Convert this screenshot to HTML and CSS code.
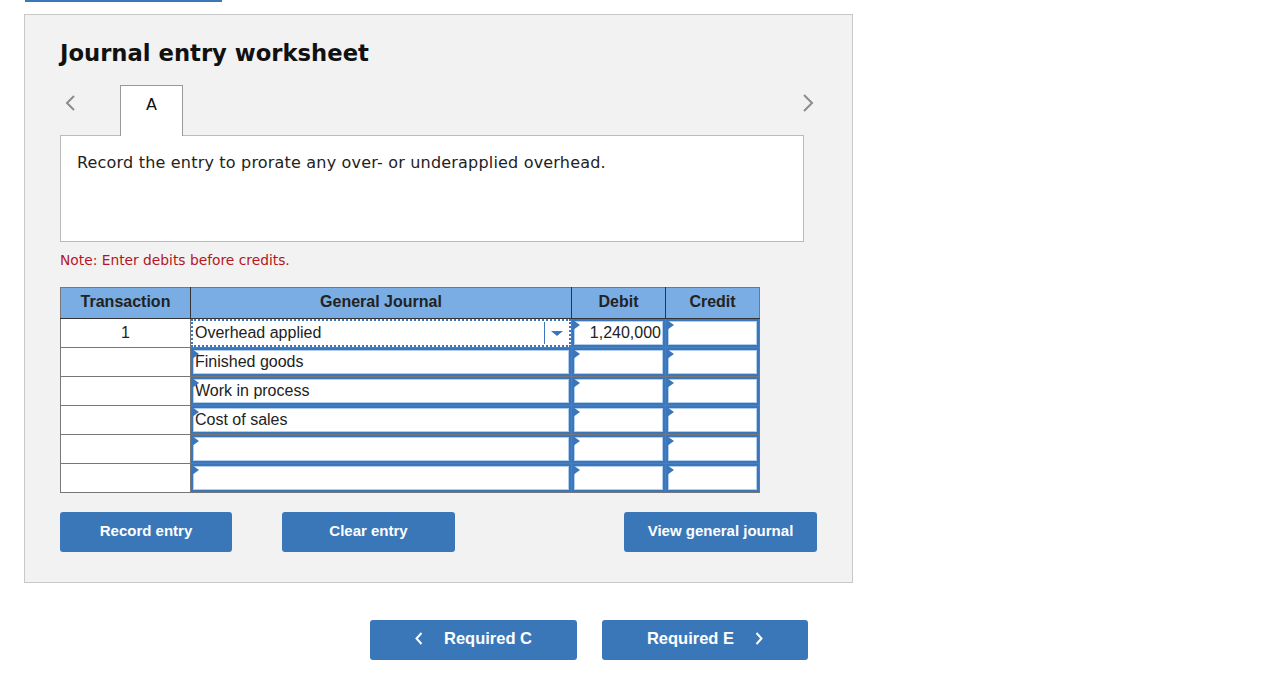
FILE: index.html
```html
<!DOCTYPE html>
<html lang="en">
<head>
    <meta charset="UTF-8">
    <meta name="viewport" content="width=device-width, initial-scale=1.0">
    <title>Journal entry worksheet</title>
    <link rel="stylesheet" href="styles.css">
</head>
<body>
    <div class="top-line"></div>

    <div class="worksheet">
        <h1>Journal entry worksheet</h1>

        <div class="tab-row">
            <button class="tab-arrow" aria-label="Previous">
                <svg width="12" height="16" viewBox="0 0 12 16"><polyline points="10,1 3,8 10,15" /></svg>
            </button>
            <div class="tab">A</div>
            <button class="tab-arrow next" aria-label="Next">
                <svg width="12" height="18" viewBox="0 0 12 18"><polyline points="2,1 10,9 2,17" /></svg>
            </button>
        </div>

        <div class="prompt">Record the entry to prorate any over- or underapplied overhead.</div>

        <p class="note">Note: Enter debits before credits.</p>

        <table class="journal">
            <colgroup>
                <col class="col-trans">
                <col class="col-account">
                <col class="col-amount">
                <col class="col-amount">
            </colgroup>
            <thead>
                <tr>
                    <th>Transaction</th>
                    <th>General Journal</th>
                    <th>Debit</th>
                    <th>Credit</th>
                </tr>
            </thead>
            <tbody>
                <tr>
                    <td class="trans">1</td>
                    <td>
                        <div class="field select">
                            <span class="value">Overhead applied</span>
                            <span class="caret"></span>
                        </div>
                    </td>
                    <td><div class="field marked amount">1,240,000</div></td>
                    <td><div class="field marked amount"></div></td>
                </tr>
                <tr>
                    <td class="trans"></td>
                    <td><div class="field marked">Finished goods</div></td>
                    <td><div class="field marked amount"></div></td>
                    <td><div class="field marked amount"></div></td>
                </tr>
                <tr>
                    <td class="trans"></td>
                    <td><div class="field marked">Work in process</div></td>
                    <td><div class="field marked amount"></div></td>
                    <td><div class="field marked amount"></div></td>
                </tr>
                <tr>
                    <td class="trans"></td>
                    <td><div class="field marked">Cost of sales</div></td>
                    <td><div class="field marked amount"></div></td>
                    <td><div class="field marked amount"></div></td>
                </tr>
                <tr>
                    <td class="trans"></td>
                    <td><div class="field marked"></div></td>
                    <td><div class="field marked amount"></div></td>
                    <td><div class="field marked amount"></div></td>
                </tr>
                <tr>
                    <td class="trans"></td>
                    <td><div class="field marked"></div></td>
                    <td><div class="field marked amount"></div></td>
                    <td><div class="field marked amount"></div></td>
                </tr>
            </tbody>
        </table>

        <div class="actions">
            <button class="btn btn-record">Record entry</button>
            <button class="btn btn-clear">Clear entry</button>
            <button class="btn btn-view">View general journal</button>
        </div>
    </div>

    <div class="nav">
        <button class="btn nav-btn">
            <svg width="8" height="13" viewBox="0 0 8 13"><polyline points="6.5,1 1.5,6.5 6.5,12" /></svg>
            <span>Required C</span>
        </button>
        <button class="btn nav-btn">
            <span>Required E</span>
            <svg width="8" height="13" viewBox="0 0 8 13"><polyline points="1.5,1 6.5,6.5 1.5,12" /></svg>
        </button>
    </div>
</body>
</html>
```

FILE: styles.css
```css
body {
    margin: 0;
    background-color: #ffffff;
    font-family: "Liberation Sans", Arial, sans-serif;
    color: #222;
}

button {
    font-family: inherit;
    cursor: pointer;
}

.top-line {
    width: 197px;
    height: 2px;
    margin-left: 25px;
    background-color: #3a77b8;
}

.worksheet {
    width: 758px;
    height: 567px;
    margin: 12px 0 0 24px;
    padding: 0 34px 0 35px;
    background-color: #f2f2f2;
    border: 1px solid #c8c8c8;
}

h1 {
    margin: 24px 0 0;
    font-family: "DejaVu Sans", Verdana, sans-serif;
    font-size: 22.7px;
    line-height: 28px;
    font-weight: bold;
    color: #111;
}

/* tabs */
.tab-row {
    display: flex;
    align-items: flex-start;
    height: 51px;
    margin-top: 18px;
}

.tab-arrow {
    width: 20px;
    height: 20px;
    margin-top: 8px;
    padding: 0;
    border: none;
    background: none;
    display: flex;
    align-items: center;
    justify-content: center;
}

.tab-arrow svg polyline {
    fill: none;
    stroke: #8c8c8c;
    stroke-width: 2;
}

.tab-arrow.next {
    margin-left: auto;
}

.tab {
    position: relative;
    z-index: 1;
    width: 63px;
    height: 51px;
    margin-left: 40px;
    padding-top: 9px;
    box-sizing: border-box;
    background-color: #fff;
    border: 1px solid #999;
    border-bottom: none;
    text-align: center;
    font-family: "DejaVu Sans", Verdana, sans-serif;
    font-size: 16px;
    line-height: 20px;
    color: #111;
}

.prompt {
    width: 744px;
    height: 107px;
    margin-top: -1px;
    padding: 17px 0 0 16px;
    box-sizing: border-box;
    background-color: #fff;
    border: 1px solid #bbb;
    font-family: "DejaVu Sans", Verdana, sans-serif;
    font-size: 16px;
    line-height: 20px;
    letter-spacing: 0.19px;
    color: #222;
}

.note {
    margin: 9px 0 0;
    font-family: "DejaVu Sans", Verdana, sans-serif;
    font-size: 13.8px;
    line-height: 18px;
    color: #b3161f;
}

/* journal table */
.journal {
    width: 698px;
    margin-top: 18px;
    border-collapse: collapse;
    table-layout: fixed;
    background-color: #fff;
    font-size: 16px;
}

.col-trans {
    width: 130px;
}

.col-account {
    width: 381px;
}

.col-amount {
    width: 94px;
}

.journal th {
    height: 28px;
    padding: 0 0 2px;
    background-color: #7aade3;
    border: 1px solid #333;
    border-top-color: #777;
    font-weight: bold;
    color: #222;
    text-align: center;
    line-height: 24px;
}

.journal th:first-child {
    border-left-color: #777;
}

.journal th:last-child {
    border-right-color: #777;
}

.journal td {
    height: 28px;
    padding: 0;
    border: 1px solid #777;
    vertical-align: top;
}

.journal td.trans {
    text-align: center;
    vertical-align: middle;
    line-height: 20px;
}

.field {
    position: relative;
    height: 28px;
    padding: 0 2px;
    box-sizing: border-box;
    border: 2px solid #3b76bb;
    box-shadow: inset 0 0 0 1px #b3cdec;
    line-height: 24px;
    white-space: nowrap;
}

.field.amount {
    text-align: right;
}

.field.marked::before {
    content: "";
    position: absolute;
    top: -1px;
    left: -1px;
    border-left: 7px solid #3b76bb;
    border-top: 5px solid transparent;
    border-bottom: 5px solid transparent;
}

.field.select {
    display: flex;
    padding: 0 0 0 2px;
    border: 2px dotted #3b76bb;
    box-shadow: none;
}

.field.select .value {
    flex: 1;
}

.field.select .caret {
    width: 24px;
    margin: 1px 0;
    border-left: 1px solid #3b76bb;
    position: relative;
}

.field.select .caret::after {
    content: "";
    position: absolute;
    top: 9px;
    left: 6px;
    border-top: 5px solid #3b76bb;
    border-left: 6px solid transparent;
    border-right: 6px solid transparent;
}

/* buttons */
.actions {
    display: flex;
    margin-top: 19px;
}

.btn {
    height: 40px;
    padding: 0 0 3px;
    border: none;
    border-radius: 3px;
    background-color: #3a77b9;
    color: #fff;
    font-size: 15px;
    font-weight: bold;
}

.btn-record {
    width: 172px;
}

.btn-clear {
    width: 173px;
    margin-left: 50px;
}

.btn-view {
    width: 193px;
    margin-left: auto;
    margin-right: 1px;
}

.nav {
    display: flex;
    gap: 25px;
    margin: 37px 0 0 370px;
}

.nav-btn {
    width: 207px;
    display: flex;
    align-items: center;
    justify-content: center;
    gap: 21px;
    font-size: 16.5px;
}

.nav-btn + .nav-btn {
    width: 206px;
}

.nav-btn svg polyline {
    fill: none;
    stroke: #fff;
    stroke-width: 2;
}
```
